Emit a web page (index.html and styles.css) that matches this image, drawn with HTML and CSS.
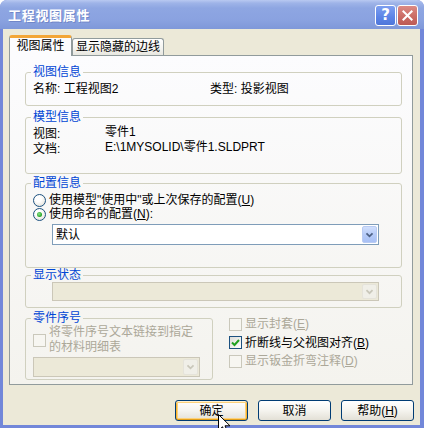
FILE: index.html
```html
<!DOCTYPE html>
<html lang="zh-CN">
<head>
<meta charset="utf-8">
<title>工程视图属性</title>
<link rel="stylesheet" href="styles.css">
</head>
<body>
<div class="window">
  <div class="titlebar">
    <span class="title">工程视图属性</span>
    <div class="tb-buttons">
      <span class="tb-btn help">?</span>
      <span class="tb-btn close"><svg width="21" height="21" viewBox="0 0 21 21"><path d="M6 6 L15 15 M15 6 L6 15" stroke="#fff" stroke-width="2.2" stroke-linecap="square"/></svg></span>
    </div>
  </div>
  <div class="client">
    <div class="tabs">
      <div class="tab active">视图属性</div>
      <div class="tab">显示隐藏的边线</div>
    </div>
    <div class="panel">
      <fieldset class="grp g1">
        <legend>视图信息</legend>
        <div class="row-info">
          <span class="c1">名称: 工程视图2</span>
          <span>类型: 投影视图</span>
        </div>
      </fieldset>
      <fieldset class="grp g2">
        <legend>模型信息</legend>
        <div class="model">
          <div class="mlabels">
            <span>视图:</span>
            <span>文档:</span>
          </div>
          <div class="mvalues">
            <span>零件1</span>
            <span>E:\1MYSOLID\零件1.SLDPRT</span>
          </div>
        </div>
      </fieldset>
      <fieldset class="grp g3">
        <legend>配置信息</legend>
        <div class="opt"><span class="radio"></span><span>使用模型"使用中"或上次保存的配置(<u>U</u>)</span></div>
        <div class="opt"><span class="radio on"></span><span>使用命名的配置(<u>N</u>):</span></div>
        <div class="combo cfg">
          <span class="combo-text">默认</span>
          <span class="drop"><svg width="15" height="18" viewBox="0 0 15 18"><path d="M4 7 L7.5 10.5 L11 7" fill="none" stroke="#4d6185" stroke-width="2"/></svg></span>
        </div>
      </fieldset>
      <fieldset class="grp g4">
        <legend>显示状态</legend>
        <div class="combo cfg disabled">
          <span class="combo-text"></span>
          <span class="drop"><svg width="15" height="17" viewBox="0 0 15 17"><path d="M4 7 L7.5 10.5 L11 7" fill="none" stroke="#c9c7ba" stroke-width="2"/></svg></span>
        </div>
      </fieldset>
      <div class="bottom-row">
        <fieldset class="grp g5">
          <legend>零件序号</legend>
          <div class="chk2 disabled-text">
            <span class="check dis"></span>
            <span class="two">将零件序号文本链接到指定<br>的材料明细表</span>
          </div>
          <div class="combo small disabled">
            <span class="combo-text"></span>
            <span class="drop"><svg width="15" height="18" viewBox="0 0 15 18"><path d="M4 7 L7.5 10.5 L11 7" fill="none" stroke="#c9c7ba" stroke-width="2"/></svg></span>
          </div>
        </fieldset>
        <div class="checks">
          <div class="opt disabled-text"><span class="check dis"></span><span>显示封套(<u>E</u>)</span></div>
          <div class="opt"><span class="check on"><svg width="11" height="11" viewBox="0 0 11 11"><path d="M2 5.5 L4.5 8 L9 3" fill="none" stroke="#21a121" stroke-width="2"/></svg></span><span>折断线与父视图对齐(<u>B</u>)</span></div>
          <div class="opt disabled-text"><span class="check dis"></span><span>显示钣金折弯注释(<u>D</u>)</span></div>
        </div>
      </div>
    </div>
    <div class="buttons">
      <button class="btn default">确定</button>
      <button class="btn">取消</button>
      <button class="btn">帮助(<u>H</u>)</button>
    </div>
  </div>
  <svg class="cursor" width="13" height="20" viewBox="0 0 13 20"><path d="M0.5 0.5 L0.5 16.5 L4.5 12.8 L7 18.5 L9.5 17.5 L7 11.8 L12 11.8 Z" fill="#fff" stroke="#000" stroke-width="1"/></svg>
</div>
</body>
</html>
```

FILE: styles.css
```css
* { box-sizing: border-box; }
html, body { margin: 0; padding: 0; }
body {
  width: 424px;
  height: 428px;
  overflow: hidden;
  background: #ffffff;
  font-family: "Liberation Sans", "Noto Sans CJK SC", sans-serif;
  font-size: 12px;
  color: #000;
}
u { text-decoration: underline; text-underline-offset: 1px; }

.window {
  position: relative;
  width: 424px;
  height: 428px;
  display: flex;
  flex-direction: column;
  background: #7287d9;
  border-radius: 7px 7px 0 0;
  overflow: hidden;
}

.titlebar {
  height: 29px;
  flex: none;
  display: flex;
  align-items: center;
  justify-content: space-between;
  padding: 0 6px 0 8px;
  background: linear-gradient(to bottom, #b9c9f1 0, #9fb4e8 3px, #8ea6e2 8px, #8aa2e0 20px, #7f98d9 29px);
}
.title {
  color: #fff;
  font-family: "Noto Sans CJK SC", sans-serif;
  font-weight: bold;
  font-size: 13px;
  letter-spacing: 0.7px;
  text-shadow: 1px 1px 0 #7086c8;
  margin-top: -1px;
}
.tb-buttons { display: flex; gap: 1px; margin-top: 1px; }
.tb-btn {
  width: 21px;
  height: 21px;
  border: 1px solid #fff;
  border-radius: 3px;
  display: flex;
  align-items: center;
  justify-content: center;
  color: #fff;
}
.help {
  background: linear-gradient(to bottom, #7d9ff0, #5b83e6 60%, #4f77da);
  font-family: "DejaVu Sans", sans-serif;
  font-weight: bold;
  font-size: 15px;
}
.close {
  background: linear-gradient(to bottom, #dc8a84, #c96a63 60%, #bd5a55);
}

.client {
  flex: 1;
  margin: 0 4px 3px 3px;
  background: #ece9d8;
  padding: 6px 0 0 6px;
  display: flex;
  flex-direction: column;
}

.tabs {
  display: flex;
  align-items: flex-end;
  height: 20px;
}
.tab {
  height: 17px;
  width: 92px;
  border: 1px solid #919b9c;
  border-bottom: none;
  border-radius: 3px 3px 0 0;
  background: linear-gradient(to bottom, #ffffff, #f3f3ef 60%, #e8e7e0);
  display: flex;
  align-items: center;
  justify-content: center;
  line-height: 14px;
}
.tab.active {
  position: relative;
  z-index: 1;
  width: 63px;
  height: 21px;
  margin-bottom: -1px;
  background: #fcfcfe;
  border-top: 3px solid #f3a637;
  border-left-color: #919b9c;
  border-right-color: #919b9c;
  padding-bottom: 2px;
}

.panel {
  height: 330px;
  margin-right: 7px;
  border: 1px solid #919b9c;
  background: linear-gradient(to bottom, #fcfcfe, #f4f3ee);
  padding: 9px 10px 0 15px;
  display: flex;
  flex-direction: column;
}

.grp {
  margin: 0;
  padding: 0 7px;
  border: 1px solid #d0d0bf;
  border-radius: 3px;
  min-width: 0;
}
.grp legend {
  color: #0046d5;
  padding: 0 2px;
  margin-left: -2px;
  line-height: 14px;
  font-size: 12px;
}
.g1 { height: 41px; }
.g2 { height: 64px; margin-top: 4px; }
.g3 { height: 92px; margin-top: 2px; }
.g4 { height: 40px; }

.row-info { display: flex; margin-top: 3px; line-height: 14px; }
.row-info .c1 { width: 177px; }

.model { display: flex; line-height: 15px; }
.mlabels { width: 72px; display: flex; flex-direction: column; margin-top: 3px; }
.mvalues { display: flex; flex-direction: column; margin-top: 1px; }

.opt {
  display: flex;
  align-items: center;
  gap: 3px;
  height: 14px;
  line-height: 14px;
}
.g3 .opt:first-of-type { margin-top: 3px; }

.radio {
  width: 13px;
  height: 13px;
  flex: none;
  border-radius: 50%;
  border: 1px solid #1c5180;
  background: radial-gradient(circle at 40% 35%, #ffffff 30%, #e6e4dc 80%, #d6d2c6);
  display: flex;
  align-items: center;
  justify-content: center;
}
.radio.on::after {
  content: "";
  width: 5px;
  height: 5px;
  border-radius: 50%;
  background: radial-gradient(circle at 40% 40%, #8ee38e, #21a121 70%);
}

.combo {
  display: flex;
  align-items: center;
  border: 1px solid #7f9db9;
  background: #fff;
  padding: 1px;
}
.combo-text { flex: 1; padding-left: 2px; line-height: 14px; }
.drop {
  width: 15px;
  align-self: stretch;
  border-radius: 2px;
  background: linear-gradient(to bottom, #d1dffc, #b6cbf8 50%, #a8c0f5);
  border: 1px solid #b9cbf3;
  display: flex;
  align-items: center;
  justify-content: center;
}
.cfg { width: 327px; margin-left: 19px; height: 21px; }
.g3 .cfg { margin-top: 3px; }
.g4 .cfg { height: 19px; }
.combo.disabled {
  border-color: #cbc7b8;
  background: #ece9d8;
}
.combo.disabled .drop {
  background: #f0efe8;
  border-color: #e5e3da;
}

.bottom-row { display: flex; margin-top: 3px; }
.g5 { width: 188px; height: 69px; flex: none; }
.chk2 { display: flex; align-items: center; gap: 3px; }
.two { line-height: 15px; }
.small { width: 167px; height: 20px; margin-top: 2px; }

.check {
  width: 13px;
  height: 13px;
  flex: none;
  border: 1px solid #1c5180;
  background: linear-gradient(135deg, #dcdcd7, #ffffff);
  display: flex;
  align-items: center;
  justify-content: center;
}
.check.dis {
  border-color: #cac8bb;
  background: #f7f6f1;
}
.disabled-text { color: #aca899; }

.checks {
  margin-left: 16px;
  margin-top: 4px;
  display: flex;
  flex-direction: column;
}
.checks .opt { height: 18.5px; }

.buttons {
  display: flex;
  justify-content: flex-end;
  gap: 10px;
  margin-top: 15px;
  padding-right: 6px;
}
.btn {
  width: 73px;
  height: 21px;
  border: 1px solid #003c74;
  border-radius: 3px;
  background: linear-gradient(to bottom, #ffffff, #f5f4ef 50%, #e3e0d6);
  font-family: "Liberation Sans", "Noto Sans CJK SC", sans-serif;
  font-size: 12px;
  color: #000;
  padding: 0;
  line-height: 14px;
}
.btn.default {
  box-shadow: inset 0 1px 0 #fff0cf, inset 0 -1px 0 #e5a01a, inset 1px 0 0 #f8b330, inset -1px 0 0 #f8b330, inset 0 0 0 2px #fcd27c;
}

.cursor {
  position: absolute;
  left: 218px;
  top: 414px;
}
```
